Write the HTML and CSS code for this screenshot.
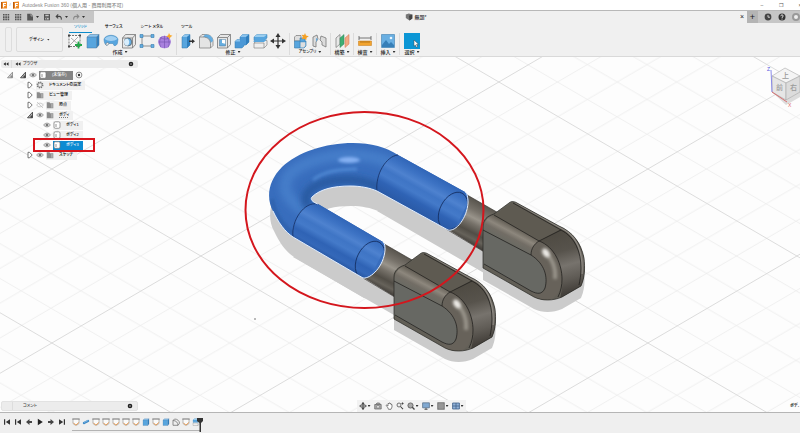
FILE: index.html
```html
<!DOCTYPE html>
<html lang="ja">
<head>
<meta charset="utf-8">
<title>Autodesk Fusion 360</title>
<link rel="stylesheet" href="styles.css">
</head>
<body>
<svg class="defs" aria-hidden="true">
  <defs>
    <symbol id="grid" viewBox="0 0 8 8"><path fill="#555" d="M1 1h1.600v1.600H1zM3.300 1h1.600v1.600H3.300zM5.600 1h1.600v1.600H5.600zM1 3.300h1.600v1.600H1zM3.300 3.300h1.600v1.600H3.300zM5.600 3.300h1.600v1.600H5.600zM1 5.600h1.600v1.600H1zM3.300 5.600h1.600v1.600H3.300zM5.600 5.600h1.600v1.600H5.600z"/></symbol>
    <symbol id="file" viewBox="0 0 8 8"><path fill="#555" d="M1.200.8h4l1.800 2v4.600H1.200z"/><path fill="none" stroke="#ccc" stroke-width=".6" d="M5 .8V3h2"/></symbol>
    <symbol id="save" viewBox="0 0 8 8"><path fill="#555" d="M1 1h6v6.300H1z"/><path fill="#c8c8c8" d="M2.300 1.700h3.400v1.500H2.300zM2.300 4.800h3.400v1.800H2.300z"/><path fill="#555" d="M3 5.300h1v1.300H3z"/></symbol>
    <symbol id="undo" viewBox="0 0 8 8"><path fill="none" stroke="#444" stroke-width="1.100" d="M3.200 1.400 1.200 3.400l2 2M1.400 3.400h2.800C6 3.400 6.400 4.600 6.300 6.600"/></symbol>
    <symbol id="redo" viewBox="0 0 8 8"><path fill="none" stroke="#888" stroke-width="1.100" d="m4.800 1.400 2 2-2 2M6.600 3.400H3.800C2 3.400 1.600 4.600 1.700 6.600"/></symbol>
    <symbol id="flogo" viewBox="0 0 8 8"><path fill="#f08a24" d="M1 1 7 .5V7.500H1z"/><path fill="#b85a10" d="M1 1h1.200v6.500H1z"/><path fill="#fff" d="M3 2h3v1H4.100v1h1.500v.9H4.100v1.600H3z"/></symbol>
    <symbol id="doccube" viewBox="0 0 8 8"><path fill="#777" d="m.8 1.500 3-1 3.500 1v4L4.500 7.500.8 5z"/><path fill="#444" d="m4 2.800 3.300-1.300v4L4.500 7.500z"/></symbol>
    <symbol id="clock" viewBox="0 0 8 8"><circle cx="4" cy="4" r="3.400" fill="#444"/><path fill="none" stroke="#eee" stroke-width=".8" d="M4 2v2.200h2"/></symbol>
    <symbol id="help" viewBox="0 0 8 8"><circle cx="4" cy="4" r="3.500" fill="#333"/><path fill="none" stroke="#fff" stroke-width=".9" d="M2.800 3.200C2.800 1.500 5.300 1.600 5.200 3 5.200 3.900 4 3.900 4 4.900M4 5.600v.9"/></symbol>

    <symbol id="t-sketch" viewBox="0 0 16 16"><path fill="#fafafa" stroke="#555" stroke-width=".8" stroke-dasharray="2 1" d="M2 2.500h11v11H2z"/><path fill="none" stroke="#888" stroke-width=".7" d="m3 12 8-8M4 5l7 6"/><path fill="#444" d="M1 1.500h2v2H1zM12 1.500h2v2h-2zM1 12.500h2v2H1z"/><path stroke="#22a84a" stroke-width="1.800" d="M11.500 8.500v7M8 12h7"/></symbol>
    <symbol id="t-box" viewBox="0 0 16 16"><path fill="#8ec5ee" d="m2 4 3-2.500h9L11.500 4z"/><path fill="#57a5de" d="M2 4h9.500v11H2z"/><path fill="#2f7fbe" d="M11.500 4 14 1.500v10.500L11.500 15z"/><path fill="none" stroke="#48779c" stroke-width=".5" d="m2 4 3-2.500h9v10.500L11.500 15H2zM2 4h9.500v11M11.500 4 14 1.500"/></symbol>
    <symbol id="t-revolve" viewBox="0 0 16 16"><path fill="#57a5de" stroke="#3b81b5" stroke-width=".5" d="M1 6c2-5 12-5 14 0l-.5 4c-.5 2-2 3-3.500 2.500L10 10.500H6L4 12.500C2 12 1 9 1 6z"/><path fill="#a2d0f2" d="M1.500 6C4 2 12 2 14.500 6 11 8.500 5 8.500 1.500 6z"/><path fill="#eee" stroke="#666" stroke-width=".5" d="m2.500 11 2-1.500 1.500 1-2 2z"/></symbol>
    <symbol id="t-hole" viewBox="0 0 16 16"><path fill="#e8e8e8" stroke="#777" stroke-width=".8" d="m1.500 5 3-3.500h10v10l-3 3.500h-10zM1.500 5h10v10M11.500 5l3-3.500"/><ellipse cx="7" cy="9" rx="3.800" ry="4" fill="#67afe2" stroke="#555" stroke-width=".7"/><path fill="#d7edfc" d="M6 5.500c3 1 3 6 0 7.300C2 12 2 6 6 5.500z"/></symbol>
    <symbol id="t-pattern" viewBox="0 0 16 16"><path fill="none" stroke="#777" stroke-width=".8" d="M3 3h10M3 13h10M3 3v10"/><path fill="#65ade0" stroke="#387eaf" stroke-width=".6" d="M1 1.500h3v3H1zM12 1.500h3v3h-3zM1 11.500h3v3H1zM12 11.500h3v3h-3z"/></symbol>
    <symbol id="t-form" viewBox="0 0 16 16"><circle cx="7.500" cy="9" r="6.300" fill="#a981de"/><path fill="none" stroke="#7450ad" stroke-width=".6" d="M1.500 9h12M7.500 2.800v12.400M3 4.500c4 2 6 2 9 .5M4 14.500c-2-4-2-7 1-11M11 14.500c2-4 1-7-1-11"/><path fill="#f9a928" d="m12 0 1 2 2.500.8L13.500 4l-.8 2.400L11.600 4.200 9.200 3.500l2-1.200z"/></symbol>
    <symbol id="t-press" viewBox="0 0 16 16"><path fill="#57a5de" stroke="#3576a6" stroke-width=".5" d="m2 4 3-2.500h5V12l-3 3H2z"/><path fill="#8fc6ee" d="m2 4 3-2.500h5L7 4z"/><path fill="#2f7fbe" d="m7 4 3-2.500V12l-3 3z"/><path fill="#333" d="M9 7.600h3V6l3 2.300L12 10.500V9H9z"/></symbol>
    <symbol id="t-fillet" viewBox="0 0 16 16"><path fill="#e4e4e4" stroke="#777" stroke-width=".7" d="M1.500 4 4 1.500h4c4 0 7 3 7 6.500v4.500L12.500 15h-11z"/><path fill="#65ade0" d="m5 4 2-2.500c5-.5 8 3 8 6.500L12.500 10C12.500 6 9 4 5 4z"/><path fill="none" stroke="#777" stroke-width=".7" d="M1.500 4H5c5 0 7.500 3 7.500 6.500V15"/></symbol>
    <symbol id="t-shell" viewBox="0 0 16 16"><path fill="#e6e6e6" stroke="#777" stroke-width=".8" d="m1.500 4.500 3-3h10v10l-3 3.500h-10zM1.500 4.500h10V15M11.500 4.500l3-3"/><path fill="#65ade0" stroke="#4d7795" stroke-width=".5" d="M3.500 6.500h6V13h-6z"/><path fill="#fff" d="M6 6.800h3.200v4L6 10z"/></symbol>
    <symbol id="t-combine" viewBox="0 0 16 16"><path fill="#4b98d6" stroke="#367cad" stroke-width=".5" d="M6 4 8.500 1.500H15V9l-3 3h-2v1l-2 2H1V8.500L3 6.500h3z"/><path fill="#8bc3ed" d="m6 4 2.500-2.500H15L12 4zM1 8.500l2-2h3v2z"/><path fill="#2f7fbe" d="m12 4 3-2.500V9l-3 3z"/></symbol>
    <symbol id="t-split" viewBox="0 0 16 16"><path fill="#57a5de" stroke="#3a7cae" stroke-width=".5" d="m2 4 3-2.500h10V5l-3 2.500H2z"/><path fill="#9bceef" d="m2 4 3-2.500h10L12 4z"/><path fill="#eee" stroke="#777" stroke-width=".6" d="m2 10 3-2.500h10V12l-3 3H2zM2 10h10v5"/><path fill="#57a5de" d="m1 9 3-2.500h11L12 9z"/></symbol>
    <symbol id="t-move" viewBox="0 0 16 16"><path fill="none" stroke="#333" stroke-width="1.200" d="M8 3v10M3 8h10"/><path fill="#333" d="m8 0 2.500 4h-5zM8 16l2.500-4h-5zM0 8l4-2.500v5zM16 8l-4-2.500v5z"/></symbol>
    <symbol id="t-newcomp" viewBox="0 0 16 16"><path fill="#dedede" stroke="#666" stroke-width=".6" d="M1.500 4 3 2.500h5V8H1.500z"/><path fill="#57a5de" stroke="#3778a8" stroke-width=".6" d="M1.500 8H7V5h5v3l1 0V13l-2 2H1.500zM7 8v7M7 9h5"/><path fill="#dedede" d="M7.500 9.300h4.800v3.500L10.800 14.500H7.500z"/><path fill="#f5a125" d="m12 0 1 2.500 2.800.7-2.200 1.500-.4 2.600-1.900-1.600-2.500.5 1-2.400-1.200-2 2.500.2z"/></symbol>
    <symbol id="t-joint" viewBox="0 0 16 16"><path fill="#dcdcdc" stroke="#777" stroke-width=".8" d="m2 4 4-2 1 4-2 3v5l-3-1zM10 3l5 2v9l-4-2V9L9 7z"/><path fill="#68a8d6" d="m5 5 2 1-2 3z"/></symbol>
    <symbol id="t-plane" viewBox="0 0 16 16"><path fill="#e8e8e8" stroke="#777" stroke-width=".7" d="m2 5 4-3.500V11l-4 3.500z"/><path fill="#3fae74" stroke="#31875b" stroke-width=".5" d="m6 5 4-3.500V11l-4 3.500z"/><path fill="#f1aa85" stroke="#d56c4c" stroke-width=".5" d="m11 5 4-3.500V11l-4 3.500z"/></symbol>
    <symbol id="t-measure" viewBox="0 0 16 16"><path fill="none" stroke="#555" stroke-width=".8" d="M2 3v4M14 3v4M2 5h12"/><path fill="#f2a42e" stroke="#c57814" stroke-width=".5" d="M1.500 8h13v4.500h-13z"/><path stroke="#8d570d" stroke-width=".6" d="M4 8v2M6 8v2M8 8v2M10 8v2M12 8v2"/></symbol>
    <symbol id="t-insert" viewBox="0 0 16 16"><path fill="#69afe2" stroke="#5a93bd" stroke-width=".8" d="M1.500 1.500h13v13h-13z"/><path fill="#377fb8" d="m2 12 4-5 3 4 2-2 3 3v2.200H2z"/><circle cx="11" cy="5" r="1.300" fill="#e9f6ff"/></symbol>
    <symbol id="t-select" viewBox="0 0 16 16"><path fill="#0b96d5" d="M0 0h16v16H0z"/><path fill="#fff" stroke="#444" stroke-width=".5" d="m10 7 4.500 4.200-2 .2 1.100 2.300-1.200.6-1.100-2.300-1.300 1.200z"/></symbol>

    <symbol id="eye" viewBox="0 0 8 8"><path fill="#ddd" stroke="#888" stroke-width=".7" d="M.6 4C2 1.500 6 1.500 7.400 4 6 6.500 2 6.500.6 4z"/><circle cx="4" cy="4" r="1.300" fill="#777"/></symbol>
    <symbol id="eyeoff" viewBox="0 0 8 8"><path fill="none" stroke="#bbb" stroke-width=".7" d="M.6 4C2 1.500 6 1.500 7.400 4 6 6.500 2 6.500.6 4zM1 1l6 6"/></symbol>
    <symbol id="folder" viewBox="0 0 8 8"><path fill="#8b8b8b" d="M.8 1.300h2.700l.6.900h3.200v5H.8z"/><path fill="#aaa" d="M5 2.500h1.800v4.300H5z"/></symbol>
    <symbol id="gear" viewBox="0 0 8 8"><circle cx="4" cy="4" r="2.700" fill="none" stroke="#777" stroke-width="1.500" stroke-dasharray="1.200 .9"/><circle cx="4" cy="4" r="2.100" fill="#eee" stroke="#777" stroke-width=".7"/></symbol>
    <symbol id="body" viewBox="0 0 8 8"><rect x="1" y=".8" width="6" height="6.500" rx="1.300" fill="#fff" stroke="#777" stroke-width=".7"/><path stroke="#888" stroke-width=".9" d="M3 3v3"/></symbol>
    <symbol id="open" viewBox="0 0 8 8"><path fill="#bbb" stroke="#333" stroke-width=".8" d="M6.500 1.200v5.600H1.500z"/><path fill="#444" d="M4.500 4.500h2v2.300h-2z"/></symbol>
    <symbol id="closed" viewBox="0 0 8 8"><path fill="#fff" stroke="#555" stroke-width=".8" d="M2 1.300h1.500L6.200 4 3.500 6.800H2z"/></symbol>
    <symbol id="target" viewBox="0 0 8 8"><circle cx="4" cy="4" r="2.900" fill="#fff" stroke="#444" stroke-width=".6"/><circle cx="4" cy="4" r="1.200" fill="#333"/></symbol>
    <symbol id="rew" viewBox="0 0 8 8"><path fill="#222" d="M3.800 2.300v3.400L1.500 4zM6.500 2.300v3.400L4.200 4z"/></symbol>
    <symbol id="dot" viewBox="0 0 8 8"><circle cx="4" cy="4" r="2.300" fill="#222"/><path stroke="#aaa" stroke-width=".6" d="M3 4h2M4 3v2"/></symbol>

    <symbol id="first" viewBox="0 0 8 8"><path fill="#333" d="M1 1.200h1.200v5.600H1zM7 1.200v5.600L2.800 4z"/></symbol>
    <symbol id="prev" viewBox="0 0 8 8"><path fill="#444" d="M4.500 1v2H7v2H4.500v2L1 4z"/></symbol>
    <symbol id="play" viewBox="0 0 8 8"><path fill="#222" d="M1.800.8 6.800 4l-5 3.200z"/></symbol>
    <symbol id="next" viewBox="0 0 8 8"><path fill="#444" d="M3.500 1v2H1v2h2.500v2L7 4z"/></symbol>
    <symbol id="last" viewBox="0 0 8 8"><path fill="#333" d="M5.800 1.200H7v5.600H5.800zM1 1.200v5.600L5.200 4z"/></symbol>
    <symbol id="f-sketch" viewBox="0 0 8 8"><path fill="#fafafa" stroke="#8a8a8a" stroke-width=".6" d="M1 1h6v4.500L5 7H3L1 5.500z"/><path stroke="#4d4d4d" stroke-dasharray="1 1" d="M.5 1h7"/><path fill="none" stroke="#e99546" stroke-width=".9" d="M1.500 4.800 3.800 7.200 6.800 4.500"/></symbol>
    <symbol id="f-pipe" viewBox="0 0 8 8"><path stroke="#3b88c6" stroke-width="2.400" stroke-linecap="round" d="m2 5 4-2"/><path stroke="#93c7ef" stroke-width=".7" d="m2 4.500 4-2"/></symbol>
    <symbol id="f-fillet" viewBox="0 0 8 8"><path fill="#eee" stroke="#666" stroke-width=".7" d="M1 2.500 2.500 1c3 0 5 2 5 4.300L6 7.300H1zM1 2.500c3 0 5 2 5 4.800"/></symbol>

    <symbol id="n-orbit" viewBox="0 0 8 8"><path stroke="#555" d="M4 .5v7M.5 4h7"/><ellipse cx="4" cy="4" rx="3" ry="1.500" fill="none" stroke="#555" stroke-width=".8"/><path fill="#444" d="M4 0 5.500 2h-3zM4 8l1.500-2h-3z"/></symbol>
    <symbol id="n-look" viewBox="0 0 8 8"><path fill="#aaa" stroke="#666" stroke-width=".7" d="M.7 2.500h6.500V7H.7zM1.500 2.500 3 1h2.500l1 1.500"/><circle cx="4" cy="4.800" r="1.500" fill="#ddd" stroke="#666" stroke-width=".5"/></symbol>
    <symbol id="n-pan" viewBox="0 0 8 8"><path fill="#fff" stroke="#555" stroke-width=".7" d="M2.500 5 1 3.500l1-.6 1 1V1.500h1V1h1v.6h1v1h1V5L6 7.300H3.500z"/></symbol>
    <symbol id="n-zoom" viewBox="0 0 8 8"><circle cx="3" cy="3" r="2" fill="#eee" stroke="#555" stroke-width=".8"/><path stroke="#444" stroke-width="1.100" d="m4.500 4.500 2.500 2.700M5.500 1.500h2M6.500.5v2"/></symbol>
    <symbol id="n-fit" viewBox="0 0 8 8"><circle cx="3.500" cy="3.500" r="2.600" fill="#aaa" stroke="#555" stroke-width=".8"/><path stroke="#444" stroke-width="1.300" d="m5.300 5.300 2.200 2.200"/></symbol>
    <symbol id="n-disp" viewBox="0 0 8 8"><path fill="#81a9d1" stroke="#4f6782" stroke-width=".7" d="M.6.800h6.800v5H.6z"/><path stroke="#555" d="M2.500 7.300h3M4 6v1"/></symbol>
    <symbol id="n-grid" viewBox="0 0 8 8"><path fill="#888" stroke="#666" stroke-width=".6" d="M.6.600h6.800v6.800H.6z"/><path stroke="#aaa" stroke-width=".5" d="M1 3h6M1 5h6M3 1v6M5 1v6"/></symbol>
    <symbol id="n-view" viewBox="0 0 8 8"><path fill="#8fb0d6" stroke="#3f5f88" stroke-width=".8" d="M.6 1h6.800v6H.6zM4 1v6M.6 4h6.800"/></symbol>
  </defs>
</svg>

<header class="titlebar">
  <svg class="ic8"><use href="#flogo"/></svg><span class="slash">/</span><svg class="ic8"><use href="#flogo"/></svg>
  <span class="apptitle">Autodesk Fusion 360 (個人用 - 商用利用不可)</span>
  <div class="winctl"><button aria-label="最小化">–</button><button aria-label="元に戻す">❐</button><button aria-label="閉じる">×</button></div>
</header>

<div class="docbar">
  <div class="quick">
    <button aria-label="データ"><svg class="ic8"><use href="#grid"/></svg></button>
    <button aria-label="アプリ"><svg class="ic8"><use href="#grid"/></svg></button>
    <button class="drop" aria-label="ファイル"><svg class="ic8"><use href="#file"/></svg></button>
    <button aria-label="保存"><svg class="ic8"><use href="#save"/></svg></button>
    <button class="drop" aria-label="取り消し"><svg class="ic8"><use href="#undo"/></svg></button>
    <button class="drop" aria-label="やり直し"><svg class="ic8"><use href="#redo"/></svg></button>
  </div>
  <div class="doctab"><svg class="ic8"><use href="#doccube"/></svg><span>無題*</span></div>
  <button class="tabclose" aria-label="タブを閉じる">×</button>
  <div class="account">
    <button class="plus" aria-label="新規タブ">+</button>
    <button aria-label="履歴"><svg class="ic8"><use href="#clock"/></svg></button>
    <button aria-label="ヘルプ"><svg class="ic8"><use href="#help"/></svg></button>
    <button class="avatar" aria-label="アカウント"></button>
  </div>
</div>

<div class="ribbon">
  <div class="stub"></div>
  <button class="workspace drop">デザイン</button>
  <div class="ribmain">
    <nav class="tabs"><a class="on" href="#solid">ソリッド</a><a href="#surface">サーフェス</a><a href="#sheet">シート メタル</a><a href="#tool">ツール</a></nav>
    <div class="groups">
      <section class="group"><div class="tools">
        <button aria-label="スケッチ"><svg><use href="#t-sketch"/></svg></button><button aria-label="押し出し"><svg><use href="#t-box"/></svg></button><button aria-label="回転"><svg><use href="#t-revolve"/></svg></button><button aria-label="穴"><svg><use href="#t-hole"/></svg></button><button aria-label="パターン"><svg><use href="#t-pattern"/></svg></button><button aria-label="フォーム"><svg><use href="#t-form"/></svg></button></div>
        <button class="glabel drop">作成</button></section>
      <section class="group"><div class="tools">
        <button aria-label="プレス"><svg><use href="#t-press"/></svg></button><button aria-label="フィレット"><svg><use href="#t-fillet"/></svg></button><button aria-label="シェル"><svg><use href="#t-shell"/></svg></button><button aria-label="結合"><svg><use href="#t-combine"/></svg></button><button aria-label="分割"><svg><use href="#t-split"/></svg></button><button aria-label="移動"><svg><use href="#t-move"/></svg></button></div>
        <button class="glabel drop">修正</button></section>
      <section class="group"><div class="tools">
        <button aria-label="新規コンポーネント"><svg><use href="#t-newcomp"/></svg></button><button aria-label="ジョイント"><svg><use href="#t-joint"/></svg></button></div>
        <button class="glabel kana drop">アセンブリ</button></section>
      <section class="group"><div class="tools"><button aria-label="平面"><svg><use href="#t-plane"/></svg></button></div><button class="glabel drop">構築</button></section>
      <section class="group"><div class="tools"><button aria-label="計測"><svg><use href="#t-measure"/></svg></button></div><button class="glabel drop">検査</button></section>
      <section class="group"><div class="tools"><button aria-label="画像"><svg><use href="#t-insert"/></svg></button></div><button class="glabel drop">挿入</button></section>
      <section class="group"><div class="tools"><button aria-label="選択ツール"><svg><use href="#t-select"/></svg></button></div><button class="glabel drop">選択</button></section>
    </div>
  </div>
</div>

<main class="stage">
  <svg class="scene" viewBox="0 57 800 355" preserveAspectRatio="xMidYMid slice" role="img" aria-label="3D モデル">
    <defs>
      <pattern id="floor" width="100" height="100" patternUnits="userSpaceOnUse" patternTransform="matrix(1.49 .87 1.49 -.87 647 169)">
        <path fill="none" stroke="#ececec" stroke-width=".5" d="M20 0v100M40 0v100M60 0v100M80 0v100M0 20h100M0 40h100M0 60h100M0 80h100"/>
        <path fill="none" stroke="#d2d2d2" stroke-width=".9" d="M0 0v100M0 0h100"/>
      </pattern>
      <linearGradient id="tubeN" gradientUnits="userSpaceOnUse" x1="349" y1="222" x2="329" y2="258">
        <stop offset="0" stop-color="#3166b8"/><stop offset=".18" stop-color="#3d73c4"/><stop offset=".34" stop-color="#4e82cf"/><stop offset=".46" stop-color="#3f75c5"/><stop offset=".6" stop-color="#447ac9"/><stop offset=".76" stop-color="#2f63b5"/><stop offset=".9" stop-color="#3468b9"/><stop offset="1" stop-color="#2a5aa6"/>
      </linearGradient>
      <linearGradient id="tubeF" gradientUnits="userSpaceOnUse" x1="430" y1="173" x2="410" y2="209">
        <stop offset="0" stop-color="#3166b8"/><stop offset=".18" stop-color="#3d73c4"/><stop offset=".34" stop-color="#4e82cf"/><stop offset=".46" stop-color="#3f75c5"/><stop offset=".6" stop-color="#447ac9"/><stop offset=".76" stop-color="#2f63b5"/><stop offset="1" stop-color="#2a5aa6"/>
      </linearGradient>
      <linearGradient id="rodfill" gradientUnits="userSpaceOnUse" x1="396" y1="250" x2="377" y2="287">
        <stop offset="0" stop-color="#57534c"/><stop offset=".25" stop-color="#77726a"/><stop offset=".42" stop-color="#99948b"/><stop offset=".55" stop-color="#77726a"/><stop offset=".75" stop-color="#514d46"/><stop offset=".88" stop-color="#66625a"/><stop offset="1" stop-color="#45413c"/>
      </linearGradient>
      <linearGradient id="fil" gradientUnits="userSpaceOnUse" x1="427" y1="278" x2="418" y2="295">
        <stop offset="0" stop-color="#625d54"/><stop offset=".35" stop-color="#8d877d"/><stop offset=".6" stop-color="#726d65"/><stop offset="1" stop-color="#686962"/>
      </linearGradient>
      <linearGradient id="side" gradientUnits="userSpaceOnUse" x1="468" y1="285" x2="484" y2="342">
        <stop offset="0" stop-color="#4f4b43"/><stop offset=".3" stop-color="#57534c"/><stop offset=".55" stop-color="#77736d"/><stop offset=".78" stop-color="#605c56"/><stop offset="1" stop-color="#44403b"/>
      </linearGradient>
      <filter id="soft" x="-30%" y="-30%" width="160%" height="160%"><feGaussianBlur stdDeviation="3"/></filter>
      <filter id="soft2" x="-50%" y="-50%" width="200%" height="200%"><feGaussianBlur stdDeviation="1.600"/></filter>
      <path id="ushape" d="M383 242 318 204C312 202 310 199 312 197 320 189 334 186 350 186 361 186 370 188 377 191L448 230C456 232 467 218 468 203 469 197 467 193 465 192L398 155C386 147 371 143 353 143 325 143 298 152 282 167 268 181 266 198 273 211 278 222 285 232 293 237L363 278C371 279 384 266 385 250 385 246 385 244 383 242z"/>
      <clipPath id="uclip"><use href="#ushape"/></clipPath>
      <path id="boxshape" d="M394 277C394 271 398 267 405 265L420 254C422 252 425 252 428 254L470 277C484 283 492 294 495 309 496 319 496 328 492 337L473 348C464 352 453 352 445 348L394 319z"/>
      <clipPath id="boxclip"><use href="#boxshape"/></clipPath>
      <g id="rod">
        <path fill="url(#rodfill)" d="M379 241 419 264 403 302 356 273z"/>
        <path fill="none" stroke="#302d29" stroke-width=".6" d="M379 241 419 264M363 278l40 24"/>
      </g>
      <g id="magnet">
        <use href="#boxshape" fill="#625f57"/>
        <g clip-path="url(#boxclip)">
          <path fill="#5e5a51" d="m405 266 19-13 49 28-23 11z"/>
          <path fill="url(#side)" d="M450 292 472 280C500 290 502 325 492 340L470 352C478 330 472 302 450 292z"/>
          <path fill="url(#fil)" d="M394 281C394 273 399 267 405 266L450 292C444 296 442 301 442 306z"/>
          <path fill="#67625a" d="M450 292C466 298 474 318 473 332 472 343 465 352 455 352 448 351 444 348 442 342 456 350 460 338 456 325 453 315 448 309 442 306 442 301 445 295 450 292z"/>
          <path fill="none" stroke="#99948b" stroke-width="4" filter="url(#soft2)" d="M455 302c9 8 12 18 11 28"/>
          <ellipse cx="457" cy="304" rx="3" ry="5" transform="rotate(-35 457 304)" fill="#eeece8" filter="url(#soft2)"/>
          <path fill="#676863" d="m394 281 48 25c14 9 17 22 14 33-3 7-8 7-14 3l-48-27z"/>
          <path fill="none" stroke="#8b8780" stroke-width="1.500" d="m426 253 46 26c17 8 22 26 21 46"/>
        </g>
        <path fill="none" stroke="#1b1a18" stroke-width=".7" d="m394 281 48 25c14 9 17 22 14 33-3 7-8 6-14 3l-47-27M405 266l45 26 22-11M450 292c-5 3-8 8-8 14M450 292c16 6 23 24 23 38 0 6-1 12-4 18M424 254l48 27c14 7 20 22 20 38 0 7-1 12-2 17"/>
        <use href="#boxshape" fill="none" stroke="#272623" stroke-width=".7"/>
      </g>
    </defs>
    <rect x="-400" y="0" width="1600" height="800" fill="#fdfdfd"/>
    <rect x="-400" y="0" width="1600" height="800" fill="url(#floor)"/>
    <g fill="#cbcbcb">
      <use href="#ushape" transform="translate(1 20)"/>
      <path d="m293 257 101 58 12-22-60-45zM377 211l107 62 3-30-60-35z"/>
      <use href="#boxshape" transform="translate(0 11)"/>
      <use href="#boxshape" transform="translate(89 -39)"/>
    </g>
    <use href="#rod" transform="translate(83 -49)"/>
    <use href="#rod"/>
    <use href="#magnet" transform="translate(89 -51)"/>
    <use href="#magnet"/>
    <use href="#ushape" fill="#386dbd"/>
    <g clip-path="url(#uclip)">
      <path fill="none" stroke="#457dc9" stroke-width="12" filter="url(#soft)" d="M330 226C300 210 276 196 289 175 305 157 358 146 394 165"/>
      <path fill="none" stroke="#28599f" stroke-width="8" filter="url(#soft)" d="M309 208C298 193 315 182 340 180 355 179 366 181 382 189"/>
      <path fill="none" stroke="#2f62ad" stroke-width="4" filter="url(#soft2)" d="M272 199C276 219 285 228 300 238"/>
      <path fill="none" stroke="#4f88d3" stroke-width="3" filter="url(#soft2)" d="M313 180c9-8 27-11 44-11"/>
      <ellipse cx="349" cy="160" rx="11" ry="3" fill="#85b1f3" filter="url(#soft2)"/>
      <path fill="url(#tubeN)" d="M318 203C303 203 292 220 293 238l75 43 20-38z"/>
      <path fill="url(#tubeF)" d="M398 154C384 159 376 175 377 191l75 43 20-39z"/>
    </g>
    <g fill="none" stroke="#152f62" stroke-width=".8">
      <path d="M318 204c-14-3-27 17-25 33M398 155c-12 1-23 20-21 36"/>
      <g clip-path="url(#uclip)">
        <ellipse cx="370" cy="260" rx="13" ry="20" transform="rotate(27 370 260)"/>
        <ellipse cx="453" cy="211" rx="13" ry="20" transform="rotate(27 453 211)"/>
      </g>
    </g>
    <path fill="none" stroke="#e4efff" stroke-width="1" d="M273 211c5 11 12 21 20 26l70 41c8 1 21-12 22-28 0-4 0-6-2-8M318 204c-6-2-8-5-6-7 8-8 22-11 38-11 11 0 20 2 27 5l71 39c8 2 19-12 20-27 0-6-1-10-3-11"/>
    <ellipse cx="364.500" cy="210" rx="119" ry="98" fill="none" stroke="#d4161d" stroke-width="2"/>
    <path stroke="#777" stroke-width="1" d="M255 318v2"/>
  </svg>

  <aside class="browser">
    <div class="panelhead"><button aria-label="折りたたむ"><svg class="ic8"><use href="#rew"/></svg></button><div class="paneltitle"><svg class="ic8"><use href="#rew"/></svg><span>ブラウザ</span><svg class="ic8 end"><use href="#dot"/></svg></div></div>
    <ul class="tree">
      <li class="row l0"><svg class="ic8 faint"><use href="#open"/></svg><svg class="ic8"><use href="#open"/></svg><svg class="ic8"><use href="#eye"/></svg><span class="chip root"><svg class="ic8"><use href="#body"/></svg>(未保存)</span><svg class="ic8"><use href="#target"/></svg></li>
      <li class="row l1"><svg class="ic8"><use href="#closed"/></svg><span class="chip"><svg class="ic8"><use href="#gear"/></svg>ドキュメントの設定</span></li>
      <li class="row l1"><svg class="ic8"><use href="#closed"/></svg><span class="chip"><svg class="ic8"><use href="#folder"/></svg>ビュー管理</span></li>
      <li class="row l1"><svg class="ic8"><use href="#closed"/></svg><svg class="ic8"><use href="#eyeoff"/></svg><span class="chip"><svg class="ic8"><use href="#folder"/></svg>原点</span></li>
      <li class="row l1"><svg class="ic8"><use href="#open"/></svg><svg class="ic8"><use href="#eye"/></svg><span class="chip dotted"><svg class="ic8"><use href="#folder"/></svg>ボディ</span></li>
      <li class="row l2"><svg class="ic8"><use href="#eye"/></svg><span class="chip"><svg class="ic8"><use href="#body"/></svg>ボディ1</span></li>
      <li class="row l2"><svg class="ic8"><use href="#eye"/></svg><span class="chip"><svg class="ic8"><use href="#body"/></svg>ボディ2</span></li>
      <li class="row l2 marked"><svg class="ic8"><use href="#eye"/></svg><span class="chip sel"><svg class="ic8"><use href="#body"/></svg>ボディ3</span></li>
      <li class="row l1"><svg class="ic8"><use href="#closed"/></svg><svg class="ic8"><use href="#eye"/></svg><span class="chip"><svg class="ic8"><use href="#folder"/></svg>スケッチ</span></li>
    </ul>
  </aside>

  <svg class="viewcube" viewBox="764 62 36 48" role="img" aria-label="ビューキューブ">
    <path fill="#bbb" opacity=".5" d="m773 93 13 12 14-8v-8z"/>
    <path fill="#f4f4f4" stroke="#aaa" stroke-width=".6" d="m785 68 15 8-14 7-14-7z"/>
    <path fill="#e6e6e6" stroke="#aaa" stroke-width=".6" d="m772 76 14 7v17l-14-8z"/>
    <path fill="#dcdcdc" stroke="#aaa" stroke-width=".6" d="m786 83 14-7v16l-14 8z"/>
    <path stroke="#8b8be8" d="m771 70 1 22"/><path stroke="#d87070" d="m772 92 15 10"/>
    <g class="cubetext"><text x="782" y="78">上</text><text x="776" y="90">前</text><text x="790" y="90">右</text></g>
    <text class="axis" x="767" y="71" fill="#5555dd">Z</text><text class="axis" x="788" y="107" fill="#dd6666">X</text>
  </svg>

  <footer class="stagefoot">
    <div class="panelhead comment"><span class="grip"></span><div class="paneltitle"><span>コメント</span><svg class="ic8 end"><use href="#dot"/></svg></div></div>
    <div class="navbar">
      <button class="drop" aria-label="オービット"><svg class="ic8"><use href="#n-orbit"/></svg></button><button aria-label="ビュー正面"><svg class="ic8"><use href="#n-look"/></svg></button><button aria-label="画面移動"><svg class="ic8"><use href="#n-pan"/></svg></button><button aria-label="ズーム"><svg class="ic8"><use href="#n-zoom"/></svg></button><button class="drop" aria-label="フィット"><svg class="ic8"><use href="#n-fit"/></svg></button><button class="drop" aria-label="表示設定"><svg class="ic8"><use href="#n-disp"/></svg></button><button class="drop" aria-label="グリッド"><svg class="ic8"><use href="#n-grid"/></svg></button><button class="drop" aria-label="ビューポート"><svg class="ic8"><use href="#n-view"/></svg></button>
    </div>
    <div class="status">ボデ-</div>
  </footer>
</main>

<footer class="timeline">
  <div class="playback"><button aria-label="先頭"><svg class="ic8"><use href="#first"/></svg></button><button aria-label="前へ"><svg class="ic8"><use href="#first"/></svg></button><button aria-label="戻る"><svg class="ic8"><use href="#prev"/></svg></button><button aria-label="再生"><svg class="ic8"><use href="#play"/></svg></button><button aria-label="進む"><svg class="ic8"><use href="#next"/></svg></button><button aria-label="末尾"><svg class="ic8"><use href="#last"/></svg></button></div>
  <div class="features"><svg class="ic8"><use href="#f-sketch"/></svg><svg class="ic8"><use href="#f-pipe"/></svg><svg class="ic8"><use href="#f-sketch"/></svg><svg class="ic8"><use href="#f-sketch"/></svg><svg class="ic8"><use href="#f-sketch"/></svg><svg class="ic8"><use href="#f-sketch"/></svg><svg class="ic8"><use href="#f-sketch"/></svg><svg class="ic8"><use href="#t-box"/></svg><svg class="ic8"><use href="#f-sketch"/></svg><svg class="ic8"><use href="#t-box"/></svg><svg class="ic8"><use href="#f-fillet"/></svg><svg class="ic8"><use href="#f-sketch"/></svg><svg class="ic8"><use href="#t-split"/></svg></div>
  <svg class="marker" viewBox="0 0 6 14"><path fill="#333" d="M0 0h6v3L4 5v9H2.500V5L0 3z"/></svg>
</footer>
</body>
</html>
```
FILE: styles.css
```css
* { box-sizing: border-box; }
body {
  margin: 0;
  height: 100vh;
  display: flex;
  flex-direction: column;
  overflow: hidden;
  background: #fff;
  color: #222;
  font: 500 4px/8px "Liberation Sans", "Noto Sans CJK JP", sans-serif;
  font-feature-settings: "palt";
}
button {
  margin: 0; padding: 0; border: 0; background: none;
  font: inherit; color: inherit;
  display: flex; align-items: center; justify-content: center;
}
a { color: inherit; text-decoration: none; }
svg { display: block; flex: none; }
.defs { position: absolute; width: 0; height: 0; }
.ic8 { width: 8px; height: 8px; }
.drop::after {
  content: "";
  width: 3px;
  height: 2px;
  margin-left: 3px;
  background: #333;
  clip-path: polygon(0 0, 100% 0, 50% 100%);
}

.titlebar { display: flex; align-items: center; height: 11px; flex: none; border-bottom: 1px solid #b8b8b8; color: #888; }
.slash { width: 4px; text-align: center; }
.apptitle { margin-left: 2px; font-size: 5px; }
.winctl { margin-left: auto; display: flex; gap: 11px; font-size: 5px; }
.winctl button { width: 8px; color: #555; }
.winctl button:last-child { margin-right: -4px; }

.docbar { display: flex; height: 12px; flex: none; background: #f0f0f0; }
.quick { display: flex; align-items: center; gap: 4px; width: 94px; padding-left: 2px; background: #c6c6c6; }
.quick .drop::after { margin-left: 2px; }
.doctab { flex: 1; display: flex; align-items: center; justify-content: center; gap: 2px; color: #222; font-size: 5px; }
.tabclose { width: 10px; font-size: 7px; }
.account { display: flex; align-items: center; gap: 6px; background: #c6c6c6; overflow: hidden; width: 53px; }
.plus { width: 13px; height: 12px; background: #b4b4b4; font-size: 9px; }
.avatar { flex: none; width: 8px; height: 8px; border-radius: 50%; background: #eee; border: 2px solid #999; }

.ribbon { display: flex; height: 34px; flex: none; background: #f0f0f0; border-bottom: 1px solid #d9d9d9; }
.stub { width: 7px; margin: 4px 4px 4px 5px; border: 1px solid #ddd; border-radius: 2px; }
.workspace { width: 47px; margin: 4px 0; border: 1px solid #dcdcdc; border-radius: 2px; color: #000; }
.ribmain { display: flex; flex-direction: column; }
.tabs { display: flex; gap: 18px; padding-left: 6px; height: 10px; color: #000; }
.tabs a { height: 10px; }
.tabs .on { color: #0b8ac9; border-bottom: 1px solid #0b8ac9; padding: 0 5px; margin-right: -5px; }
.groups { display: flex; }
.group { padding: 0 3px; border-right: 1px solid #dcdcdc; height: 22px; }
.group:first-child { padding-left: 4px; }
.group:last-child { border: 0; padding-left: 4px; }
.tools { display: flex; gap: 2px; justify-content: center; }
.tools svg { width: 16px; height: 16px; }
.glabel { width: 100%; height: 6px; white-space: nowrap; font-size: 5px; }
.kana { font-size: 4px; }
.tools + .glabel::after { margin-left: 2px; }

.stage { position: relative; flex: 1; min-height: 0; display: flex; flex-direction: column; overflow: hidden; }
.scene { position: absolute; inset: 0; width: 100%; height: 100%; }
.browser, .stagefoot { position: relative; }
.browser { width: 138px; padding: 3px 0 0 1px; }
.panelhead { display: flex; height: 8px; background: #ececec; border-radius: 2px; }
.panelhead > button { width: 11px; border-right: 1px solid #ddd; }
.paneltitle { flex: 1; display: flex; align-items: center; padding-left: 2px; gap: 1px; color: #444; }
.end { margin-left: auto; margin-right: 3px; }
.tree { list-style: none; margin: 2px 0 0; padding: 0; }
.row { display: flex; align-items: center; height: 10px; gap: 2px; width: max-content; }
.l0 { padding-left: 5px; }
.l0 .faint { margin-right: 3px; opacity: .6; }
.l1 { padding-left: 25px; }
.l2 { padding-left: 42px; }
.chip { display: flex; align-items: center; gap: 5px; height: 9px; padding-right: 4px; background: #f0f0f0; color: #000; }
.root { background: #858585; color: #fff; padding-right: 6px; }
.dotted { text-decoration: underline dotted #777; }
.sel { background: #0b8bd2; color: #fff; }
.marked { margin-left: 34px; padding-left: 8px; width: 58px; outline: 2px solid #d9141c; }
.viewcube { position: absolute; top: 5px; right: 0; width: 36px; height: 48px; }
.cubetext { font-size: 7px; fill: #999; }
.axis { font-size: 5px; }

.stagefoot { margin-top: auto; display: grid; grid-template-columns: 138px 1fr 10px; align-items: center; }
.comment { margin-left: 1px; height: 10px; border: 1px solid #e2e2e2; }
.grip { width: 11px; border-right: 1px solid #ddd; }
.comment .paneltitle { padding-left: 10px; }
.navbar { display: flex; justify-self: center; align-items: center; gap: 3px; height: 12px; background: #f2f2f2; padding: 0 2px; margin-right: 106px; }
.navbar .drop::after { margin-left: 1px; }
.status { white-space: nowrap; color: #111; font-weight: bold; }

.timeline { display: flex; height: 21px; flex: none; background: #efefef; border-top: 1px solid #b5b5b5; padding: 5px 0 0 3px; }
.playback { display: flex; gap: 3px; height: 8px; margin-right: 6px; }
.features { display: flex; gap: 2px; height: 13px; border-bottom: 1px solid #b4b4b4; }
.marker { width: 6px; height: 14px; margin-left: -3px; }
```
